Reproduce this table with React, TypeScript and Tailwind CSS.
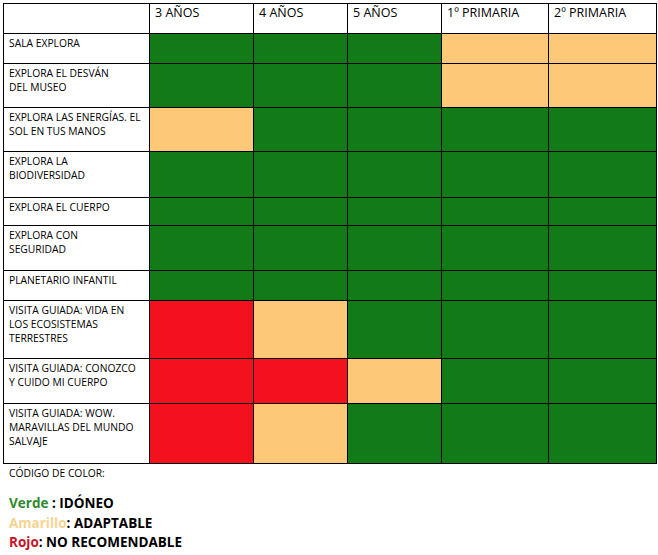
import React from "react";

type Level = "g" | "y" | "r";

const headers = ["3 AÑOS", "4 AÑOS", "5 AÑOS", "1º PRIMARIA", "2º PRIMARIA"];

const rows: { label: string[]; h: string; cells: Level[] }[] = [
  { label: ["SALA EXPLORA"], h: "h-[30px]", cells: ["g", "g", "g", "y", "y"] },
  { label: ["EXPLORA EL DESVÁN", "DEL MUSEO"], h: "h-[44px]", cells: ["g", "g", "g", "y", "y"] },
  { label: ["EXPLORA LAS ENERGÍAS. EL", "SOL EN TUS MANOS"], h: "h-[44px]", cells: ["y", "g", "g", "g", "g"] },
  { label: ["EXPLORA LA", "BIODIVERSIDAD"], h: "h-[46px]", cells: ["g", "g", "g", "g", "g"] },
  { label: ["EXPLORA EL CUERPO"], h: "h-[28px]", cells: ["g", "g", "g", "g", "g"] },
  { label: ["EXPLORA CON", "SEGURIDAD"], h: "h-[45px]", cells: ["g", "g", "g", "g", "g"] },
  { label: ["PLANETARIO INFANTIL"], h: "h-[30px]", cells: ["g", "g", "g", "g", "g"] },
  { label: ["VISITA GUIADA: VIDA EN", "LOS ECOSISTEMAS", "TERRESTRES"], h: "h-[58px]", cells: ["r", "y", "g", "g", "g"] },
  { label: ["VISITA GUIADA: CONOZCO", "Y CUIDO MI CUERPO"], h: "h-[45px]", cells: ["r", "r", "y", "g", "g"] },
  { label: ["VISITA GUIADA: WOW.", "MARAVILLAS DEL MUNDO", "SALVAJE"], h: "h-[60px]", cells: ["r", "y", "g", "g", "g"] },
];

const fill: Record<Level, string> = {
  g: "bg-[#127a16]",
  y: "bg-[#fdc978]",
  r: "bg-[#f2111d]",
};

export default function App() {
  return (
    <div className="w-[658px] h-[555px] bg-white pt-[3px] pl-[3px] font-['Open_Sans',sans-serif] text-black">
      <table className="table-fixed border-collapse w-[653px]">
        <colgroup>
          <col className="w-[146px]" />
          <col className="w-[104px]" />
          <col className="w-[94px]" />
          <col className="w-[94px]" />
          <col className="w-[107px]" />
          <col className="w-[108px]" />
        </colgroup>
        <thead>
          <tr className="h-[30px]">
            <th className="border border-black p-0" />
            {headers.map((t) => (
              <th
                key={t}
                className="border border-black align-top text-left font-medium text-[12.5px] leading-[16px] pl-[5px] pt-[1px]"
              >
                {t}
              </th>
            ))}
          </tr>
        </thead>
        <tbody>
          {rows.map((r, i) => (
            <tr key={i} className={r.h}>
              <td className="border border-black align-top pl-[5px] pt-[2px] text-[10.3px] leading-[14px] font-medium">
                {r.label.map((l) => (
                  <div key={l} className="whitespace-nowrap">{l}</div>
                ))}
              </td>
              {r.cells.map((c, j) => (
                <td key={j} className={`border border-black ${fill[c]}`} />
              ))}
            </tr>
          ))}
        </tbody>
      </table>
      <div className="pl-[6px] pt-[2px] text-[10.3px] leading-[14px] font-medium">CÓDIGO DE COLOR:</div>
      <div className="pl-[6px] pt-[14px] text-[13.5px] leading-[19.5px] font-bold">
        <div>
          <span className="text-[#2e8a2c]">Verde</span> : IDÓNEO
        </div>
        <div>
          <span className="text-[#f7d48f]">Amarillo</span>: ADAPTABLE
        </div>
        <div>
          <span className="text-[#c8142a]">Rojo</span>: NO RECOMENDABLE
        </div>
      </div>
    </div>
  );
}
